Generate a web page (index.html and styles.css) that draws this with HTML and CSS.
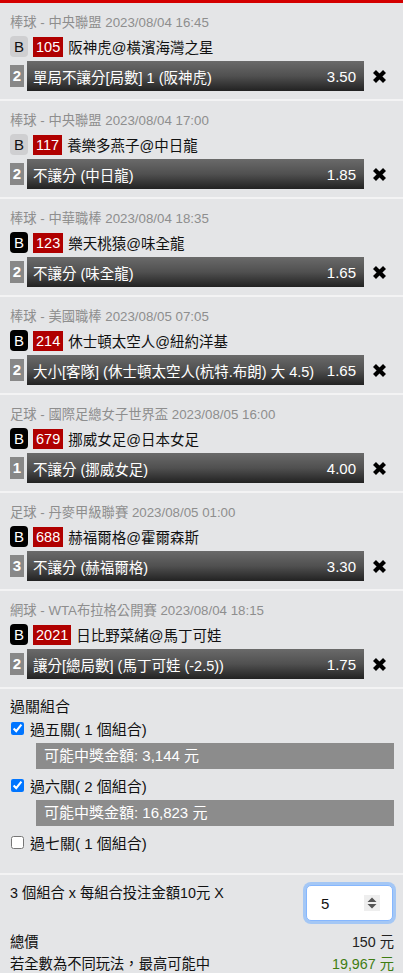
FILE: index.html
```html
<!DOCTYPE html>
<html lang="zh-Hant">
  <head>
    <meta charset="UTF-8" />
    <meta name="viewport" content="width=device-width, initial-scale=1.0" />
    <title>投注單</title>
    <link rel="stylesheet" href="styles.css">
  </head>
  <body>
    <div class="slip">
      <div class="top-bar"></div>

      <div class="bet-card">
        <div class="bet-title">棒球 - 中央聯盟 2023/08/04 16:45</div>
        <div class="match-row">
          <span class="tag-b">B</span>
          <span class="game-no">105</span>
          <span class="teams">阪神虎@橫濱海灣之星</span>
        </div>
        <div class="pick-row">
          <span class="pick-count">2</span>
          <div class="pick-bar">
            <span class="pick-name">單局不讓分[局數] 1 (阪神虎)</span>
            <span class="pick-odds">3.50</span>
          </div>
          <span class="remove-btn"><svg width="15" height="15" viewBox="0 0 15 15"><path d="M2.5 2.5 L12.5 12.5 M12.5 2.5 L2.5 12.5" stroke="#000" stroke-width="4.2"/></svg></span>
        </div>
      </div>

      <div class="bet-card">
        <div class="bet-title">棒球 - 中央聯盟 2023/08/04 17:00</div>
        <div class="match-row">
          <span class="tag-b">B</span>
          <span class="game-no">117</span>
          <span class="teams">養樂多燕子@中日龍</span>
        </div>
        <div class="pick-row">
          <span class="pick-count">2</span>
          <div class="pick-bar">
            <span class="pick-name">不讓分 (中日龍)</span>
            <span class="pick-odds">1.85</span>
          </div>
          <span class="remove-btn"><svg width="15" height="15" viewBox="0 0 15 15"><path d="M2.5 2.5 L12.5 12.5 M12.5 2.5 L2.5 12.5" stroke="#000" stroke-width="4.2"/></svg></span>
        </div>
      </div>

      <div class="bet-card">
        <div class="bet-title">棒球 - 中華職棒 2023/08/04 18:35</div>
        <div class="match-row">
          <span class="tag-b dark">B</span>
          <span class="game-no">123</span>
          <span class="teams">樂天桃猿@味全龍</span>
        </div>
        <div class="pick-row">
          <span class="pick-count">2</span>
          <div class="pick-bar">
            <span class="pick-name">不讓分 (味全龍)</span>
            <span class="pick-odds">1.65</span>
          </div>
          <span class="remove-btn"><svg width="15" height="15" viewBox="0 0 15 15"><path d="M2.5 2.5 L12.5 12.5 M12.5 2.5 L2.5 12.5" stroke="#000" stroke-width="4.2"/></svg></span>
        </div>
      </div>

      <div class="bet-card">
        <div class="bet-title">棒球 - 美國職棒 2023/08/05 07:05</div>
        <div class="match-row">
          <span class="tag-b dark">B</span>
          <span class="game-no">214</span>
          <span class="teams">休士頓太空人@紐約洋基</span>
        </div>
        <div class="pick-row">
          <span class="pick-count">2</span>
          <div class="pick-bar">
            <span class="pick-name">大小[客隊] (休士頓太空人(杭特.布朗) 大 4.5)</span>
            <span class="pick-odds">1.65</span>
          </div>
          <span class="remove-btn"><svg width="15" height="15" viewBox="0 0 15 15"><path d="M2.5 2.5 L12.5 12.5 M12.5 2.5 L2.5 12.5" stroke="#000" stroke-width="4.2"/></svg></span>
        </div>
      </div>

      <div class="bet-card">
        <div class="bet-title">足球 - 國際足總女子世界盃 2023/08/05 16:00</div>
        <div class="match-row">
          <span class="tag-b dark">B</span>
          <span class="game-no">679</span>
          <span class="teams">挪威女足@日本女足</span>
        </div>
        <div class="pick-row">
          <span class="pick-count">1</span>
          <div class="pick-bar">
            <span class="pick-name">不讓分 (挪威女足)</span>
            <span class="pick-odds">4.00</span>
          </div>
          <span class="remove-btn"><svg width="15" height="15" viewBox="0 0 15 15"><path d="M2.5 2.5 L12.5 12.5 M12.5 2.5 L2.5 12.5" stroke="#000" stroke-width="4.2"/></svg></span>
        </div>
      </div>

      <div class="bet-card">
        <div class="bet-title">足球 - 丹麥甲級聯賽 2023/08/05 01:00</div>
        <div class="match-row">
          <span class="tag-b dark">B</span>
          <span class="game-no">688</span>
          <span class="teams">赫福爾格@霍爾森斯</span>
        </div>
        <div class="pick-row">
          <span class="pick-count">3</span>
          <div class="pick-bar">
            <span class="pick-name">不讓分 (赫福爾格)</span>
            <span class="pick-odds">3.30</span>
          </div>
          <span class="remove-btn"><svg width="15" height="15" viewBox="0 0 15 15"><path d="M2.5 2.5 L12.5 12.5 M12.5 2.5 L2.5 12.5" stroke="#000" stroke-width="4.2"/></svg></span>
        </div>
      </div>

      <div class="bet-card">
        <div class="bet-title">網球 - WTA布拉格公開賽 2023/08/04 18:15</div>
        <div class="match-row">
          <span class="tag-b dark">B</span>
          <span class="game-no">2021</span>
          <span class="teams">日比野菜緒@馬丁可娃</span>
        </div>
        <div class="pick-row">
          <span class="pick-count">2</span>
          <div class="pick-bar">
            <span class="pick-name">讓分[總局數] (馬丁可娃 (-2.5))</span>
            <span class="pick-odds">1.75</span>
          </div>
          <span class="remove-btn"><svg width="15" height="15" viewBox="0 0 15 15"><path d="M2.5 2.5 L12.5 12.5 M12.5 2.5 L2.5 12.5" stroke="#000" stroke-width="4.2"/></svg></span>
        </div>
      </div>

      <div class="combo-section">
        <div class="combo-head">過關組合</div>
        <label class="combo-option"><input type="checkbox" checked /> 過五關( 1 個組合)</label>
        <div class="prize-box">可能中獎金額: 3,144 元</div>
        <label class="combo-option"><input type="checkbox" checked /> 過六關( 2 個組合)</label>
        <div class="prize-box">可能中獎金額: 16,823 元</div>
        <label class="combo-option"><input type="checkbox" /> 過七關( 1 個組合)</label>
      </div>

      <div class="summary">
        <div class="stake-row">
          <span class="stake-text">3 個組合 x 每組合投注金額10元 X</span>
          <div class="qty-box">
            <span class="qty-value">5</span>
            <span class="qty-spin"><svg width="10" height="12" viewBox="0 0 10 12"><path d="M5 0.5 L9.5 5 L0.5 5 Z M0.5 7 L9.5 7 L5 11.5 Z" fill="#555"/></svg></span>
          </div>
        </div>
        <div class="total-row first">
          <span>總價</span>
          <span class="total-value">150 元</span>
        </div>
        <div class="total-row">
          <span>若全數為不同玩法，最高可能中</span>
          <span class="max-value">19,967 元</span>
        </div>
      </div>
    </div>
  </body>
</html>
```

FILE: styles.css
```css
body {
  margin: 0;
  padding: 0;
  background-color: #fff;
  font-family: "Liberation Sans", "Noto Sans CJK TC", sans-serif;
  color: #111;
}

.slip {
  width: 403px;
  background-color: #e4e5e7;
  min-height: 973px;
}

.top-bar {
  height: 3px;
  background-color: #d40000;
}

.bet-card {
  padding: 10px 0 8px 10px;
  border-bottom: 2px solid #f3f3f4;
}

.bet-title {
  height: 20px;
  line-height: 20px;
  font-size: 13.3px;
  color: #8e8e8e;
  white-space: nowrap;
}

.match-row {
  display: flex;
  align-items: center;
  height: 21px;
  margin-top: 3px;
  font-size: 14.5px;
}

.tag-b {
  width: 18px;
  height: 21px;
  line-height: 21px;
  text-align: center;
  border-radius: 4px;
  background-color: #cfcfd1;
  color: #111;
  font-size: 15px;
}

.tag-b.dark {
  background-color: #000;
  color: #fff;
}

.game-no {
  margin-left: 5px;
  padding: 0 3px;
  height: 20px;
  line-height: 20px;
  background-color: #b00000;
  color: #fff;
  font-size: 14.5px;
}

.teams {
  margin-left: 5px;
  white-space: nowrap;
}

.pick-row {
  display: flex;
  align-items: center;
  margin-top: 4px;
  height: 30px;
}

.pick-count {
  width: 14px;
  height: 22px;
  line-height: 22px;
  text-align: center;
  background-color: #888;
  color: #fff;
  font-size: 15px;
  font-weight: bold;
}

.pick-bar {
  display: flex;
  justify-content: space-between;
  align-items: center;
  margin-left: 3px;
  width: 337px;
  height: 30px;
  padding: 0 8px 0 6px;
  box-sizing: border-box;
  background: linear-gradient(#6a6a6a, #505050 50%, #222);
  color: #fff;
  font-size: 14.5px;
  white-space: nowrap;
}

.pick-odds {
  font-size: 15px;
}

.remove-btn {
  display: flex;
  margin-left: 8px;
}

.combo-section {
  padding: 7px 0 20px 10px;
  border-bottom: 2px solid #f3f3f4;
  font-size: 15px;
}

.combo-head {
  height: 21px;
  line-height: 21px;
}

.combo-option {
  display: flex;
  align-items: center;
  height: 22px;
}

.combo-option input {
  margin: 0 6px 0 1px;
  width: 13px;
  height: 13px;
}

.prize-box {
  margin: 4px 9px 5px 26px;
  height: 26px;
  line-height: 26px;
  padding-left: 8px;
  background-color: #8c8c8c;
  color: #fff;
}

.summary {
  padding: 8px 9px 0 10px;
  font-size: 14.3px;
}

.stake-row {
  display: flex;
  justify-content: space-between;
  align-items: flex-start;
}

.stake-text {
  line-height: 20px;
}

.qty-box {
  display: flex;
  justify-content: space-between;
  align-items: center;
  width: 87px;
  height: 36px;
  margin: 2px 1px 0 0;
  padding: 0 12px 0 14px;
  box-sizing: border-box;
  background-color: #fff;
  border: 1px solid #86b7fe;
  border-radius: 5px;
  box-shadow: 0 0 0 3px #a4c7f5;
  font-size: 15px;
}

.qty-spin {
  display: flex;
  align-items: center;
  justify-content: center;
  width: 16px;
  height: 16px;
  background-color: #eee;
}

.total-row {
  display: flex;
  justify-content: space-between;
  height: 22px;
  line-height: 22px;
}

.total-row.first {
  margin-top: 10px;
}

.total-value {
  color: #222;
}

.max-value {
  color: #3f7d12;
}
```
